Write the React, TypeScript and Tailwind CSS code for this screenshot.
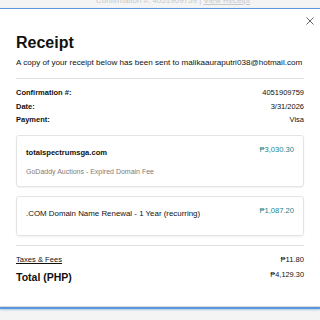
import React from "react";

const font = { fontFamily: '"Liberation Sans", Arial, sans-serif' };

function Row({ label, value }: { label: string; value: string }) {
  return (
    <div className="flex h-[13.5px] items-center justify-between text-[7.5px] text-[#111]">
      <span className="font-bold">{label}</span>
      <span>{value}</span>
    </div>
  );
}

export default function App() {
  return (
    <div className="flex h-[320px] w-[320px] flex-col overflow-hidden bg-[#f4f4f4]" style={font}>
      <div className="h-[7.5px] overflow-hidden">
        <div className="-mt-[4px] pl-[96px] text-[8px] leading-[10px] text-[#c9c9c9]">
          Confirmation #: 4051909759 | <span className="underline">View Receipt</span>
        </div>
      </div>
      <div className="h-[1.5px] bg-[#5a97dc] shadow-[0_1px_2px_rgba(90,151,220,0.5)]" />
      <div className="relative flex flex-col bg-white px-4 pb-[22px] pt-[24px]">
        <button className="absolute right-[5px] top-[7px] flex h-[10px] w-[10px] items-center justify-center">
          <svg width="8" height="8" viewBox="0 0 8 8" fill="none">
            <path d="M0.5 0.5L7.5 7.5M7.5 0.5L0.5 7.5" stroke="#555" strokeWidth="0.9" />
          </svg>
        </button>
        <h1 className="text-[16px] font-bold leading-[20px] text-[#111]">Receipt</h1>
        <p className="mt-[5px] whitespace-nowrap text-[8.1px] leading-[10px] text-[#111]">
          A copy of your receipt below has been sent to malikaauraputri038@hotmail.com
        </p>
        <div className="mt-[10px] h-px bg-[#e2e2e2]" />
        <div className="mt-[7px] flex flex-col">
          <Row label="Confirmation #:" value="4051909759" />
          <Row label="Date:" value="3/31/2026" />
          <Row label="Payment:" value="Visa" />
        </div>
        <div className="mt-[8px] flex flex-col gap-[9px]">
          <div className="rounded-[3px] border border-[#e4e4e4] px-[9px] pb-[9px] pt-[9px] shadow-[0_1px_2px_rgba(0,0,0,0.06)]">
            <div className="flex items-start justify-between">
              <div className="flex flex-col">
                <span className="mt-[2px] text-[7.6px] font-bold leading-[11px] text-[#111]">totalspectrumsga.com</span>
                <span className="mt-[9px] text-[7px] leading-[10px] text-[#7d7d7d]">GoDaddy Auctions - Expired Domain Fee</span>
              </div>
              <span className="text-[7.6px] leading-[10px] text-[#1a8589]">₱3,030.30</span>
            </div>
          </div>
          <div className="rounded-[3px] border border-[#e4e4e4] px-[9px] pb-[16px] pt-[9px] shadow-[0_1px_2px_rgba(0,0,0,0.06)]">
            <div className="flex items-start justify-between">
              <span className="mt-[2px] whitespace-nowrap text-[7.9px] leading-[11px] text-[#111]">.COM Domain Name Renewal - 1 Year (recurring)</span>
              <span className="text-[7.6px] leading-[10px] text-[#1a8589]">₱1,087.20</span>
            </div>
          </div>
        </div>
        <div className="mt-[9px] h-px bg-[#e2e2e2]" />
        <div className="mt-[9px] flex items-center justify-between text-[7.6px] leading-[10px] text-[#111]">
          <span className="underline">Taxes &amp; Fees</span>
          <span>₱11.80</span>
        </div>
        <div className="mt-[5px] flex items-start justify-between">
          <span className="text-[10.5px] font-bold leading-[14px] text-[#111]">Total (PHP)</span>
          <span className="text-[7.4px] leading-[10px] text-[#111]">₱4,129.30</span>
        </div>
      </div>
      <div className="h-px bg-[#dcdcdc]" />
      <div className="h-[2px] bg-[#5a97dc] shadow-[0_1px_2px_rgba(90,151,220,0.5)]" />
    </div>
  );
}
